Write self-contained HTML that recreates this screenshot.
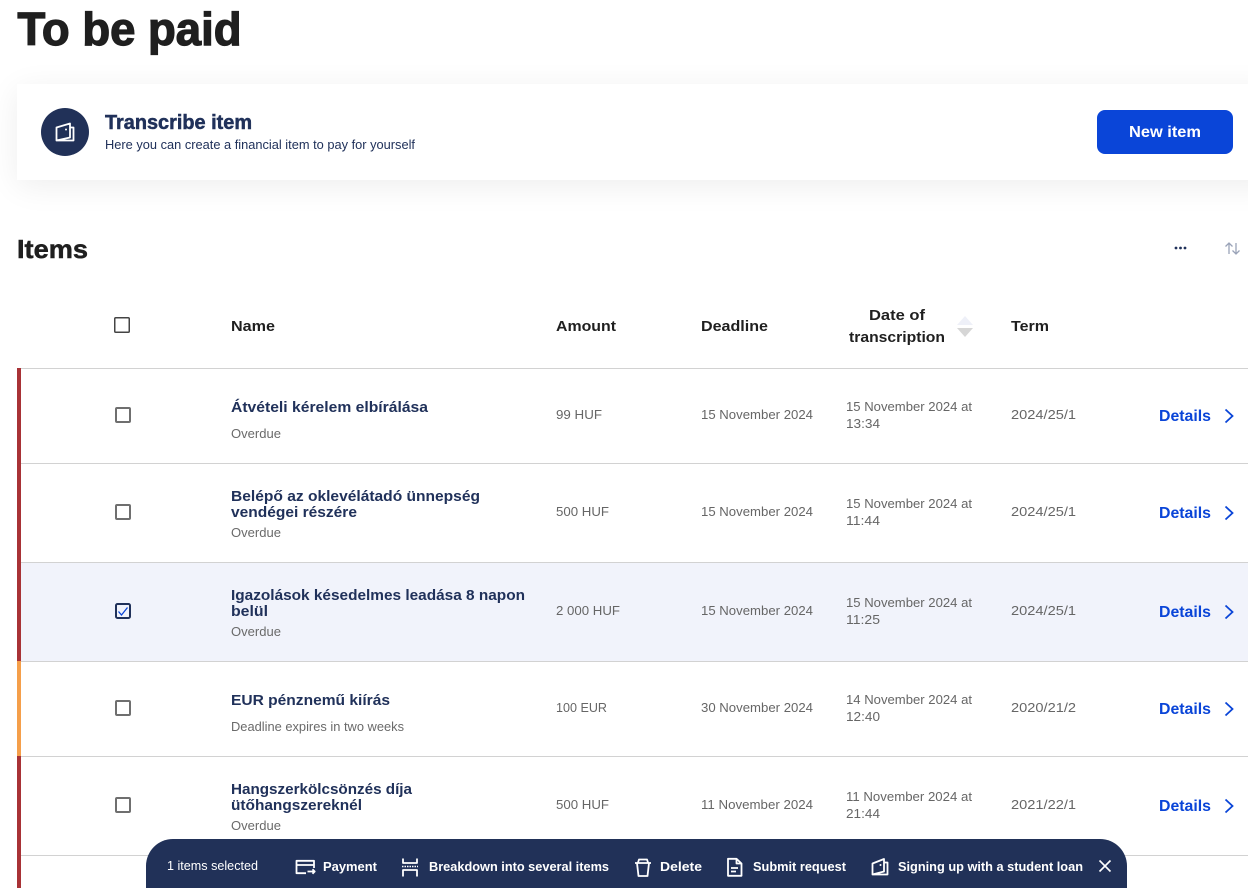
<!DOCTYPE html>
<html lang="en"><head><meta charset="utf-8"><title>To be paid</title>
<style>
html,body{margin:0;padding:0;background:#fff;width:1248px;height:888px;overflow:hidden}
#w{position:relative;width:1248px;height:888px;overflow:hidden}
#card{position:absolute;left:17px;top:84px;width:1260px;height:96px;background:#fff;box-shadow:0 6px 30px rgba(0,0,0,.07)}
svg{position:absolute;left:0;top:0}
text{font-family:"Liberation Sans",sans-serif}
.n{font-size:15px;font-weight:700;fill:#20315a}
.s{font-size:12.5px;fill:#6a6a6a}
.v{font-size:12.5px;fill:#666}
.h{font-size:15px;font-weight:700;fill:#1f1f1f}
.d{font-size:16px;font-weight:700;fill:#0a45d8}
.b{font-size:13px;font-weight:700;fill:#fff}
.ic{fill:none;stroke:#fff;stroke-width:1.8;stroke-linejoin:round}
.cb{fill:#fff;stroke:#6f6f6f;stroke-width:2}
.ch{fill:none;stroke:#0a45d8;stroke-width:1.8}
</style></head><body><div id="w">
<div id="card"></div>
<svg width="1248" height="888" viewBox="0 0 1248 888">
<text x="17.500" y="45" font-size="46" font-weight="700" fill="#1f1f1f" stroke="#1f1f1f" stroke-width="1.300" textLength="224" lengthAdjust="spacingAndGlyphs">To be paid</text>
<circle cx="65" cy="132" r="24" fill="#213158"/>
<path class="ic" d="M56.500 127.500L70 123.500V137.500L56.500 140.500ZM70 127.500H73.500V140.500H56.500"/>
<circle cx="66" cy="129.500" r="1" fill="#fff"/>
<text x="105" y="129" font-size="20" font-weight="700" fill="#20315a" stroke="#20315a" stroke-width=".5" textLength="147" lengthAdjust="spacingAndGlyphs">Transcribe item</text>
<text x="105" y="149" font-size="13" fill="#20315a" textLength="310" lengthAdjust="spacingAndGlyphs">Here you can create a financial item to pay for yourself</text>
<rect x="1097" y="110" width="136" height="44" rx="8" fill="#0a45d8"/>
<text x="1129" y="137" font-size="16" font-weight="700" fill="#fff" textLength="72" lengthAdjust="spacingAndGlyphs">New item</text>
<text x="17" y="258" font-size="26" font-weight="700" fill="#1f1f1f" stroke="#1f1f1f" stroke-width=".5" textLength="71" lengthAdjust="spacingAndGlyphs">Items</text>
<g fill="#20315a"><circle cx="1176" cy="248" r="1.400"/><circle cx="1180.500" cy="248" r="1.400"/><circle cx="1185" cy="248" r="1.400"/></g>
<path d="M1229 254V243M1225.500 246.500L1229 243L1232.500 246.500M1236 243V254M1232.500 250.500L1236 254L1239.500 250.500" fill="none" stroke="#9aa3b8" stroke-width="1.300"/>

<rect x="114.750" y="317.750" width="14.500" height="14.500" rx="1" fill="#fff" stroke="#444" stroke-width="1.500"/>
<text class="h" x="231" y="331" textLength="44" lengthAdjust="spacingAndGlyphs">Name</text>
<text class="h" x="556" y="331" textLength="60" lengthAdjust="spacingAndGlyphs">Amount</text>
<text class="h" x="701" y="331" textLength="67" lengthAdjust="spacingAndGlyphs">Deadline</text>
<text class="h" x="869" y="320" textLength="56" lengthAdjust="spacingAndGlyphs">Date of</text>
<text class="h" x="849" y="342" textLength="96" lengthAdjust="spacingAndGlyphs">transcription</text>
<text class="h" x="1011" y="331" textLength="38" lengthAdjust="spacingAndGlyphs">Term</text>
<path d="M957 325L965 316L973 325Z" fill="#eef0f8"/><path d="M957 328L965 337L973 328Z" fill="#d6d6d6"/>

<rect x="21" y="563" width="1227" height="98" fill="#f1f3fb"/>
<rect x="17" y="368" width="4" height="293" fill="#a83236"/>
<rect x="17" y="661" width="4" height="95" fill="#f59f4a"/>
<rect x="17" y="756" width="4" height="132" fill="#a83236"/>
<g fill="#d2d2d2"><rect x="21" y="368" width="1227" height="1"/><rect x="21" y="463" width="1227" height="1"/><rect x="21" y="562" width="1227" height="1"/><rect x="21" y="661" width="1227" height="1"/><rect x="21" y="756" width="1227" height="1"/><rect x="21" y="855" width="1227" height="1"/></g>

<!-- Row 1 -->
<rect class="cb" x="116" y="408" width="14" height="14" rx="1"/>
<text class="n" x="231" y="412" textLength="197" lengthAdjust="spacingAndGlyphs">Átvételi kérelem elbírálása</text>
<text class="s" x="231" y="438" textLength="50" lengthAdjust="spacingAndGlyphs">Overdue</text>
<text class="v" x="556" y="419" textLength="46" lengthAdjust="spacingAndGlyphs">99 HUF</text>
<text class="v" x="701" y="419" textLength="112" lengthAdjust="spacingAndGlyphs">15 November 2024</text>
<text class="v" x="846" y="411" textLength="126" lengthAdjust="spacingAndGlyphs">15 November 2024 at</text>
<text class="v" x="846" y="428" textLength="34" lengthAdjust="spacingAndGlyphs">13:34</text>
<text class="v" x="1011" y="419" textLength="65" lengthAdjust="spacingAndGlyphs">2024/25/1</text>
<text class="d" x="1159" y="421" textLength="52" lengthAdjust="spacingAndGlyphs">Details</text>
<path class="ch" d="M1225.500 409.500L1232.500 416L1225.500 422.500"/>

<!-- Row 2 -->
<rect class="cb" x="116" y="505" width="14" height="14" rx="1"/>
<text class="n" x="231" y="501" textLength="249" lengthAdjust="spacingAndGlyphs">Belépő az oklevélátadó ünnepség</text>
<text class="n" x="231" y="517" textLength="126" lengthAdjust="spacingAndGlyphs">vendégei részére</text>
<text class="s" x="231" y="537" textLength="50" lengthAdjust="spacingAndGlyphs">Overdue</text>
<text class="v" x="556" y="516" textLength="53" lengthAdjust="spacingAndGlyphs">500 HUF</text>
<text class="v" x="701" y="516" textLength="112" lengthAdjust="spacingAndGlyphs">15 November 2024</text>
<text class="v" x="846" y="508" textLength="126" lengthAdjust="spacingAndGlyphs">15 November 2024 at</text>
<text class="v" x="846" y="525" textLength="34" lengthAdjust="spacingAndGlyphs">11:44</text>
<text class="v" x="1011" y="516" textLength="65" lengthAdjust="spacingAndGlyphs">2024/25/1</text>
<text class="d" x="1159" y="518" textLength="52" lengthAdjust="spacingAndGlyphs">Details</text>
<path class="ch" d="M1225.500 506.500L1232.500 513L1225.500 519.500"/>

<!-- Row 3 -->
<rect x="116" y="604" width="14" height="14" rx="1.500" fill="#f1f3fb" stroke="#20315a" stroke-width="2"/>
<path d="M118.500 611.500L121.500 615L127.500 607.500" fill="none" stroke="#0a45d8" stroke-width="1.300"/>
<text class="n" x="231" y="600" textLength="294" lengthAdjust="spacingAndGlyphs">Igazolások késedelmes leadása 8 napon</text>
<text class="n" x="231" y="616" textLength="37" lengthAdjust="spacingAndGlyphs">belül</text>
<text class="s" x="231" y="636" textLength="50" lengthAdjust="spacingAndGlyphs">Overdue</text>
<text class="v" x="556" y="615" textLength="64" lengthAdjust="spacingAndGlyphs">2 000 HUF</text>
<text class="v" x="701" y="615" textLength="112" lengthAdjust="spacingAndGlyphs">15 November 2024</text>
<text class="v" x="846" y="607" textLength="126" lengthAdjust="spacingAndGlyphs">15 November 2024 at</text>
<text class="v" x="846" y="624" textLength="34" lengthAdjust="spacingAndGlyphs">11:25</text>
<text class="v" x="1011" y="615" textLength="65" lengthAdjust="spacingAndGlyphs">2024/25/1</text>
<text class="d" x="1159" y="617" textLength="52" lengthAdjust="spacingAndGlyphs">Details</text>
<path class="ch" d="M1225.500 605.500L1232.500 612L1225.500 618.500"/>

<!-- Row 4 -->
<rect class="cb" x="116" y="701" width="14" height="14" rx="1"/>
<text class="n" x="231" y="705" textLength="159" lengthAdjust="spacingAndGlyphs">EUR pénznemű kiírás</text>
<text class="s" x="231" y="731" textLength="173" lengthAdjust="spacingAndGlyphs">Deadline expires in two weeks</text>
<text class="v" x="556" y="712" textLength="51" lengthAdjust="spacingAndGlyphs">100 EUR</text>
<text class="v" x="701" y="712" textLength="112" lengthAdjust="spacingAndGlyphs">30 November 2024</text>
<text class="v" x="846" y="704" textLength="126" lengthAdjust="spacingAndGlyphs">14 November 2024 at</text>
<text class="v" x="846" y="721" textLength="34" lengthAdjust="spacingAndGlyphs">12:40</text>
<text class="v" x="1011" y="712" textLength="65" lengthAdjust="spacingAndGlyphs">2020/21/2</text>
<text class="d" x="1159" y="714" textLength="52" lengthAdjust="spacingAndGlyphs">Details</text>
<path class="ch" d="M1225.500 702.500L1232.500 709L1225.500 715.500"/>

<!-- Row 5 -->
<rect class="cb" x="116" y="798" width="14" height="14" rx="1"/>
<text class="n" x="231" y="794" textLength="181" lengthAdjust="spacingAndGlyphs">Hangszerkölcsönzés díja</text>
<text class="n" x="231" y="810" textLength="131" lengthAdjust="spacingAndGlyphs">ütőhangszereknél</text>
<text class="s" x="231" y="830" textLength="50" lengthAdjust="spacingAndGlyphs">Overdue</text>
<text class="v" x="556" y="809" textLength="53" lengthAdjust="spacingAndGlyphs">500 HUF</text>
<text class="v" x="701" y="809" textLength="112" lengthAdjust="spacingAndGlyphs">11 November 2024</text>
<text class="v" x="846" y="801" textLength="126" lengthAdjust="spacingAndGlyphs">11 November 2024 at</text>
<text class="v" x="846" y="818" textLength="34" lengthAdjust="spacingAndGlyphs">21:44</text>
<text class="v" x="1011" y="809" textLength="65" lengthAdjust="spacingAndGlyphs">2021/22/1</text>
<text class="d" x="1159" y="811" textLength="52" lengthAdjust="spacingAndGlyphs">Details</text>
<path class="ch" d="M1225.500 799.500L1232.500 806L1225.500 812.500"/>

<!-- Action bar -->
<rect x="146" y="839" width="981" height="90" rx="27" fill="#213158"/>
<text x="167" y="870" font-size="12.500" fill="#fff" textLength="91" lengthAdjust="spacingAndGlyphs">1 items selected</text>
<path class="ic" d="M306 873.200H296.500V860.800H314V868M296.500 865H314M307.500 871.500H314.500M312.500 869.300L314.700 871.500L312.500 873.700"/>
<text class="b" x="323" y="871" textLength="54" lengthAdjust="spacingAndGlyphs">Payment</text>
<path class="ic" d="M403 858.500V863H417V858.500M403 876.500V870H417V876.500"/>
<path d="M402 866.500H418" stroke="#fff" stroke-width="1.400" stroke-dasharray="1.500 1" fill="none"/>
<text class="b" x="429" y="871" textLength="180" lengthAdjust="spacingAndGlyphs">Breakdown into several items</text>
<path class="ic" d="M635 863H651M637 863L638.500 876H647.500L649 863M638 862.500L639 859.500H647L648 862.500"/>
<text class="b" x="660" y="871" textLength="42" lengthAdjust="spacingAndGlyphs">Delete</text>
<path class="ic" d="M728 858.800H736.500L741.500 863.500V875.800H728ZM736.500 858.800V863.500H741.500M731 868H738M731 871.500H736"/>
<text class="b" x="753" y="871" textLength="93" lengthAdjust="spacingAndGlyphs">Submit request</text>
<path class="ic" d="M872.500 863.500L884 859V871.500L872.500 874.500ZM884 862.500H887.500V874.500H872.500"/>
<circle cx="880.500" cy="865" r="1" fill="#fff"/>
<text class="b" x="898" y="871" textLength="185" lengthAdjust="spacingAndGlyphs">Signing up with a student loan</text>
<path d="M1099.500 860.500L1110.500 871.500M1110.500 860.500L1099.500 871.500" stroke="#fff" stroke-width="1.600" fill="none"/>
</svg>
</div></body></html>
